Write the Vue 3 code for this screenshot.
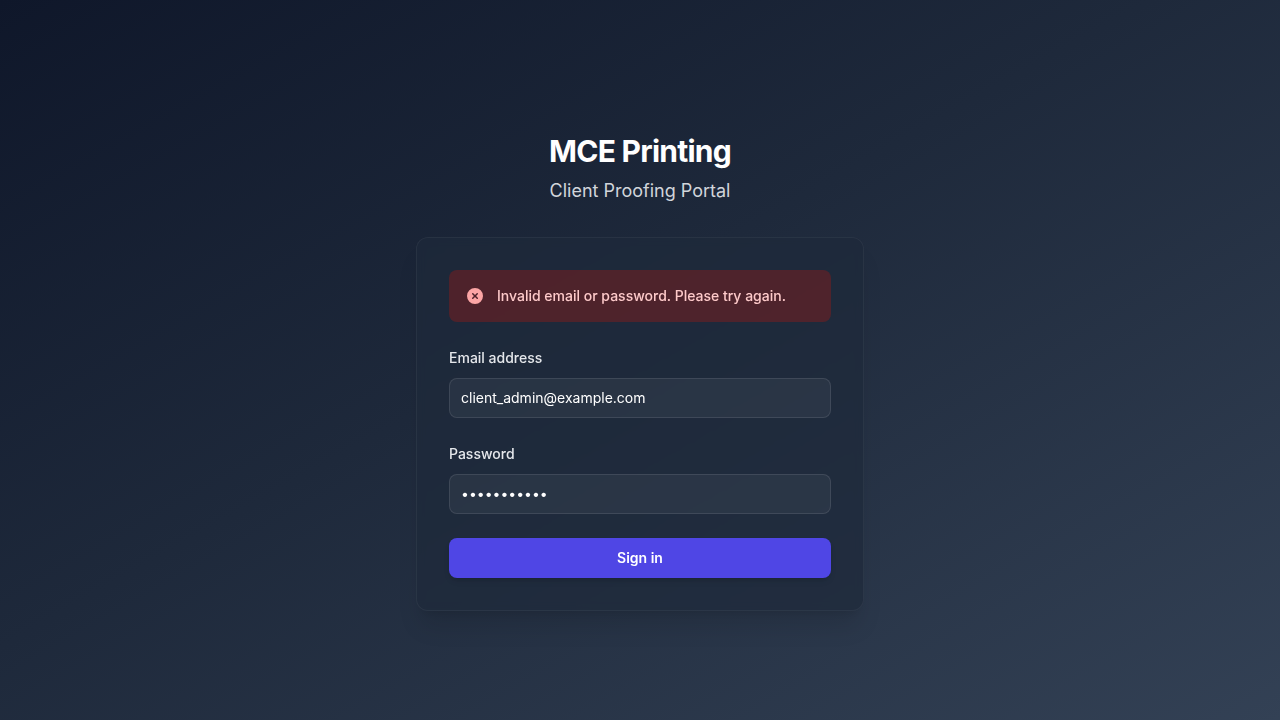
<script setup>
import { ref } from 'vue'

const email = ref('client_admin@example.com')
const password = ref('password123')
const error = ref('Invalid email or password. Please try again.')
</script>

<template>
  <main class="page">
    <header class="brand">
      <h1>MCE Printing</h1>
      <p>Client Proofing Portal</p>
    </header>
    <section class="card">
      <div v-if="error" class="alert" role="alert">
        <svg viewBox="0 0 20 20" fill="currentColor" aria-hidden="true">
          <path fill-rule="evenodd" clip-rule="evenodd" d="M10 18a8 8 0 100-16 8 8 0 000 16zM8.28 7.22a.75.75 0 00-1.06 1.06L8.94 10l-1.72 1.72a.75.75 0 101.06 1.06L10 11.06l1.72 1.72a.75.75 0 101.06-1.06L11.06 10l1.72-1.72a.75.75 0 00-1.06-1.06L10 8.94 8.28 7.22z" />
        </svg>
        <p>{{ error }}</p>
      </div>
      <form class="form" @submit.prevent>
        <div class="field">
          <label for="email">Email address</label>
          <input id="email" v-model="email" type="email" autocomplete="email" />
        </div>
        <div class="field">
          <label for="password">Password</label>
          <input id="password" v-model="password" type="password" autocomplete="current-password" />
        </div>
        <button type="submit">Sign in</button>
      </form>
    </section>
  </main>
</template>

<style>
body {
  margin: 0;
}
</style>

<style scoped>
.page {
  box-sizing: border-box;
  min-height: 100vh;
  padding: 72px 32px 48px;
  display: flex;
  flex-direction: column;
  align-items: center;
  justify-content: center;
  background: linear-gradient(to bottom right, #0f172a, #1e293b 45%, #334155);
  color: #fff;
  font-family: Inter, "Liberation Sans", sans-serif;
  font-size: 14px;
  line-height: 20px;
}
.brand {
  text-align: center;
}
h1 {
  margin: 0;
  font-size: 30px;
  line-height: 36px;
  font-weight: 700;
  letter-spacing: -0.025em;
}
.brand p {
  margin: 8px 0 0;
  font-size: 18px;
  line-height: 28px;
  color: #d1d5db;
}
.card {
  box-sizing: border-box;
  width: 100%;
  max-width: 448px;
  margin-top: 32px;
  padding: 32px;
  border: 1px solid rgba(255, 255, 255, 0.05);
  border-radius: 12px;
  background: rgba(30, 41, 59, 0.7);
  box-shadow: 0 20px 25px -5px rgba(0, 0, 0, 0.1), 0 8px 10px -6px rgba(0, 0, 0, 0.1);
  backdrop-filter: blur(4px);
}
.alert {
  display: flex;
  gap: 12px;
  margin-bottom: 24px;
  padding: 16px;
  border-radius: 8px;
  background: rgba(127, 29, 29, 0.5);
  color: #fecaca;
  font-weight: 500;
}
.alert svg {
  width: 20px;
  height: 20px;
  flex: none;
  color: #fca5a5;
}
.alert p {
  margin: 0;
}
.form {
  display: grid;
  gap: 24px;
}
.field {
  display: grid;
  gap: 8px;
}
label {
  line-height: 24px;
  font-weight: 500;
  color: #e5e7eb;
}
input {
  box-sizing: border-box;
  width: 100%;
  height: 40px;
  padding: 6px 11px 8px;
  border: 1px solid rgba(255, 255, 255, 0.1);
  border-radius: 8px;
  background: rgba(255, 255, 255, 0.05);
  color: #fff;
  font: inherit;
  line-height: 24px;
}
button {
  height: 40px;
  padding: 8px 12px;
  border: 0;
  border-radius: 8px;
  background: #4f46e5;
  color: #fff;
  font: inherit;
  font-weight: 600;
  box-shadow: 0 4px 6px -1px rgba(0, 0, 0, 0.1), 0 2px 4px -2px rgba(0, 0, 0, 0.1);
  cursor: pointer;
}
</style>
